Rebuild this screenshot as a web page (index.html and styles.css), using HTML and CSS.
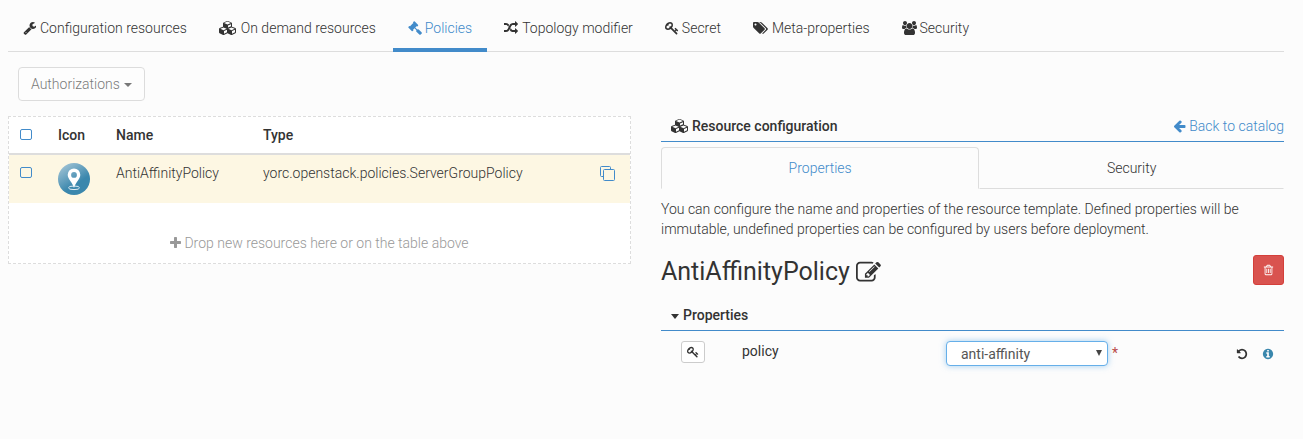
FILE: index.html
```html
<!DOCTYPE html>
<html lang="en">
<head>
<meta charset="utf-8">
<title>Policies</title>
<link rel="stylesheet" href="styles.css">
</head>
<body>
<svg class="sprite" aria-hidden="true">
  <symbol id="wrench" viewBox="0 0 1664 1792"><path d="M448 1472q0-26-19-45t-45-19-45 19-19 45 19 45 45 19 45-19 19-45zm644-420l-682 682q-37 37-90 37-52 0-91-37l-106-108q-38-36-38-90 0-53 38-91l681-681q39 98 114.500 173.500t173.500 114.500zm634-435q0 39-23 106-47 134-164.500 217.500t-258.500 83.500q-185 0-316.500-131.500t-131.500-316.500 131.500-316.500 316.500-131.500q58 0 121.500 16.500t107.500 46.500q16 11 16 28t-16 28l-293 169v224l193 107q5-3 79-48.500t135.500-81 70.500-35.500q15 0 23.500 10t8.500 25z"/></symbol>
  <symbol id="cubes" viewBox="0 0 2304 1792"><path fill-rule="evenodd" d="M640 1632l384-192v-314l-384 164zM576 1178l404-173-404-173-404 173zM1664 1632l384-192v-314l-384 164zM1600 1178l404-173-404-173-404 173zM1152 835l384-165v-266l-384 164zM1088 456l441-189-441-189-441 189zM2176 1024v416q0 36-19 67t-52 47l-448 224q-25 14-57 14t-57-14l-448-224q-4-2-7-4-2 2-7 4l-448 224q-25 14-57 14t-57-14l-448-224q-33-16-52-47t-19-67v-416q0-38 21.500-70t56.500-48l434-186v-400q0-38 21.500-70t56.500-48l448-192q23-10 50-10t50 10l448 192q35 16 56.500 48t21.500 70v400l434 186q36 16 57 48t21 70z"/></symbol>
  <symbol id="gavel" viewBox="0 0 1792 1792"><path d="M1771 1536q0 53-37 90l-107 108q-39 37-91 37-53 0-90-37l-363-364q-38-36-38-90 0-53 43-96l-256-256-126 126q-14 14-34 14t-34-14q2 2 12.500 12t12.500 13 10 11.500 10 13.500 6 13.500 5.500 16.500 1.500 18q0 38-28 68-3 3-16.500 18t-19 20.500-18.500 16.500-22 15.500-22 9-26 4.500q-40 0-68-28l-408-408q-28-28-28-68 0-13 4.500-26t9-22 15.500-22 16.500-18.500 20.500-19 18-16.500q30-28 68-28 10 0 18 1.500t16.500 5.500 13.500 6 13.500 10 11.500 10 13 12.500 12 12.500q-14-14-14-34t14-34l348-348q14-14 34-14t34 14q-2-2-12.500-12t-12.500-13-10-11.500-10-13.500-6-13.500-5.500-16.500-1.500-18q0-38 28-68 3-3 16.500-18t19-20.500 18.500-16.500 22-15.500 22-9 26-4.500q40 0 68 28l408 408q28 28 28 68 0 13-4.500 26t-9 22-15.500 22-16.500 18.500-20.500 19-18 16.500q-30 28-68 28-10 0-18-1.500t-16.500-5.500-13.500-6-13.500-10-11.500-10-13-12.500-12-12.500q14 14 14 34t-14 34l-126 126 256 256q43-43 96-43 52 0 91 37l363 363q37 39 37 91z"/></symbol>
  <symbol id="random" viewBox="0 0 1792 1792"><path d="M666 481q-60 92-137 273-22-45-37-72.500t-40.500-63.500-51-56.500-63-35-81.500-14.500h-224q-14 0-23-9t-9-23v-192q0-14 9-23t23-9h224q250 0 410 225zm1126 799q0 14-9 23l-320 320q-9 9-23 9-13 0-22.500-9.500t-9.500-22.500v-192q-32 0-85 .5t-81 1-73-1-71-5-64-10.500-63-18.500-58-28.500-59-40-55-53.500-56-69.500q59-93 136-273 22 45 37 72.500t40.500 63.500 51 56.500 63 35 81.500 14.500h256v-192q0-14 9-23t23-9q12 0 24 10l319 319q9 9 9 23zm0-896q0 14-9 23l-320 320q-9 9-23 9-13 0-22.500-9.500t-9.500-22.500v-192h-256q-48 0-87 15t-69 45-51 61.500-45 77.500q-32 62-78 171-29 66-49.500 111t-54 105-64 100-74 83-90 68.500-106.500 42-128 16.500h-224q-14 0-23-9t-9-23v-192q0-14 9-23t23-9h224q48 0 87-15t69-45 51-61.500 45-77.500q32-62 78-171 29-66 49.500-111t54-105 64-100 74-83 90-68.500 106.500-42 128-16.500h256v-192q0-14 9-23t23-9q12 0 24 10l319 319q9 9 9 23z"/></symbol>
  <symbol id="key" viewBox="0 0 1792 1792"><path d="M832 512q0-80-56-136t-136-56-136 56-56 136q0 42 19 83-41-19-83-19-80 0-136 56t-56 136 56 136 136 56 136-56 56-136q0-42-19-83 41 19 83 19 80 0 136-56t56-136zm851 704q0 17-49 66t-66 49q-9 0-28.500-16t-36.500-33-38.500-40-24.500-26l-96 96 220 220q28 28 28 68 0 42-39 81t-81 39q-40 0-68-28l-671-671q-176 131-365 131-163 0-265.500-102.500t-102.500-265.500q0-160 95-313t248-248 313-95q163 0 265.500 102.500t102.500 265.500q0 189-131 365l355 355 96-96q-3-3-26-24.500t-40-38.500-33-36.500-16-28.500q0-17 49-66t66-49q13 0 23 10 6 6 46 44.500t82 79.500 86.500 86 73 78 28.500 41z"/></symbol>
  <symbol id="tags" viewBox="0 0 1920 1792"><path d="M448 448q0-53-37.500-90.500t-90.500-37.500-90.500 37.500-37.500 90.500 37.500 90.500 90.500 37.500 90.500-37.500 37.500-90.500zm1067 576q0 53-37 90l-491 492q-39 37-91 37-53 0-90-37l-715-716q-38-37-64.500-101t-26.500-117v-416q0-52 38-90t90-38h416q53 0 117 26.500t102 64.500l715 714q37 39 37 91zm384 0q0 53-37 90l-491 492q-39 37-91 37-36 0-59-14t-53-45l470-470q37-37 37-90 0-52-37-91l-715-714q-38-38-102-64.500t-117-26.500h224q53 0 117 26.500t102 64.500l715 714q37 39 37 91z"/></symbol>
  <symbol id="users" viewBox="0 0 1920 1792"><path d="M593 896q-162 5-265 128h-134q-82 0-138-40.500t-56-118.500q0-353 124-353 6 0 43.500 21t97.500 42.500 119 21.500q67 0 133-23-5 37-5 66 0 139 81 256zm1071 637q0 120-73 189.500t-194 69.500h-874q-121 0-194-69.500t-73-189.500q0-53 3.500-103.500t14-109 26.500-108.500 43-97.500 62-81 85.500-53.500 111.500-20q10 0 43 21.500t73 48 107 48 135 21.500 135-21.500 107-48 73-48 43-21.500q61 0 111.500 20t85.500 53.500 62 81 43 97.500 26.500 108.500 14 109 3.500 103.500zm-1024-1277q0 106-75 181t-181 75-181-75-75-181 75-181 181-75 181 75 75 181zm704 384q0 159-112.500 271.500t-271.500 112.500-271.500-112.500-112.500-271.500 112.500-271.500 271.500-112.500 271.500 112.500 112.500 271.500zm576 225q0 78-56 118.500t-138 40.500h-134q-103-123-265-128 81-117 81-256 0-29-5-66 66 23 133 23 59 0 119-21.500t97.500-42.500 43.500-21q124 0 124 353zm-128-609q0 106-75 181t-181 75-181-75-75-181 75-181 181-75 181 75 75 181z"/></symbol>
  <symbol id="plus" viewBox="192 0 1408 1792"><path d="M1600 736v192q0 40-28 68t-68 28h-416v416q0 40-28 68t-68 28h-192q-40 0-68-28t-28-68v-416h-416q-40 0-68-28t-28-68v-192q0-40 28-68t68-28h416v-416q0-40 28-68t68-28h192q40 0 68 28t28 68v416h416q40 0 68 28t28 68z"/></symbol>
  <symbol id="arrow-left" viewBox="64 0 1664 1792"><path d="M1664 896v128q0 53-32.500 90.500t-84.500 37.500h-704l293 294q38 36 38 90t-38 90l-75 76q-37 37-90 37-52 0-91-37l-651-652q-37-37-37-90 0-52 37-91l651-650q38-38 91-38 52 0 90 38l75 74q38 38 38 91t-38 91l-293 293h704q52 0 84.500 37.500t32.500 90.500z"/></symbol>
  <symbol id="edit" viewBox="0 0 1792 1792"><path d="M888 1184l116-116-152-152-116 116v56h96v96h56zm440-720q-16-16-33 1l-350 350q-17 17-1 33t33-1l350-350q17-17 1-33zm80 594v190q0 119-84.500 203.500t-203.500 84.500h-832q-119 0-203.500-84.500t-84.500-203.500v-832q0-119 84.500-203.500t203.500-84.500h832q63 0 117 25 15 7 18 23 3 17-9 29l-49 49q-14 14-32 8-23-6-45-6h-832q-66 0-113 47t-47 113v832q0 66 47 113t113 47h832q66 0 113-47t47-113v-126q0-13 9-22l64-64q15-15 35-7t20 29zm-96-738l288 288-672 672h-288v-288zm444 132l-92 92-288-288 92-92q28-28 68-28t68 28l152 152q28 28 28 68t-28 68z"/></symbol>
  <symbol id="trash" viewBox="192 0 1408 1792"><path d="M704 736v576q0 14-9 23t-23 9h-64q-14 0-23-9t-9-23v-576q0-14 9-23t23-9h64q14 0 23 9t9 23zm256 0v576q0 14-9 23t-23 9h-64q-14 0-23-9t-9-23v-576q0-14 9-23t23-9h64q14 0 23 9t9 23zm256 0v576q0 14-9 23t-23 9h-64q-14 0-23-9t-9-23v-576q0-14 9-23t23-9h64q14 0 23 9t9 23zm128 724v-948h-896v948q0 22 7 40.500t14.500 27 10.500 8.500h832q3 0 10.500-8.500t14.500-27 7-40.500zm-672-1076h448l-48-117q-7-9-17-11h-317q-10 2-17 11zm928 32v64q0 14-9 23t-23 9h-96v948q0 83-47 143.500t-113 60.500h-832q-66 0-113-58.500t-47-141.500v-952h-96q-14 0-23-9t-9-23v-64q0-14 9-23t23-9h309l70-167q15-37 54-63t79-26h320q40 0 79 26t54 63l70 167h309q14 0 23 9t9 23z"/></symbol>
  <symbol id="undo" viewBox="128 0 1536 1792"><path d="M1664 896q0 156-61 298t-164 245-245 164-298 61q-172 0-327-72.500t-264-204.500q-7-10-6.500-22.500t8.500-20.500l137-138q10-9 25-9 16 2 23 12 73 95 179 147t225 52q104 0 198.500-40.500t163.500-109.500 109.500-163.500 40.500-198.500-40.500-198.500-109.500-163.500-163.500-109.500-198.500-40.500q-98 0-188 35.500t-160 101.500l137 138q31 30 14 69-17 40-59 40h-448q-26 0-45-19t-19-45v-448q0-42 40-59 39-17 69 14l130 129q107-101 244.500-156.500t284.500-55.500q156 0 298 61t245 164 164 245 61 298z"/></symbol>
  <symbol id="info" viewBox="128 0 1536 1792"><path d="M1152 1376v-160q0-14-9-23t-23-9h-96v-512q0-14-9-23t-23-9h-320q-14 0-23 9t-9 23v160q0 14 9 23t23 9h96v320h-96q-14 0-23 9t-9 23v160q0 14 9 23t23 9h448q14 0 23-9t9-23zm-128-896v-160q0-14-9-23t-23-9h-192q-14 0-23 9t-9 23v160q0 14 9 23t23 9h192q14 0 23-9t9-23zm640 416q0 209-103 385.500t-279.500 279.500-385.500 103-385.500-103-279.500-279.500-103-385.500 103-385.500 279.500-279.500 385.500-103 385.500 103 279.500 279.500 103 385.500z"/></symbol>
</svg>

<nav class="main-tabs">
  <a class="main-tab" href="#"><svg class="icon w13"><use href="#wrench"/></svg>Configuration resources</a>
  <a class="main-tab" href="#"><svg class="icon w18"><use href="#cubes"/></svg>On demand resources</a>
  <a class="main-tab active" href="#"><svg class="icon tight"><use href="#gavel"/></svg>Policies</a>
  <a class="main-tab" href="#"><svg class="icon"><use href="#random"/></svg>Topology modifier</a>
  <a class="main-tab" href="#"><svg class="icon tight"><use href="#key"/></svg>Secret</a>
  <a class="main-tab" href="#"><svg class="icon w15"><use href="#tags"/></svg>Meta-properties</a>
  <a class="main-tab" href="#"><svg class="icon w15 tight"><use href="#users"/></svg>Security</a>
</nav>

<div class="toolbar">
  <button class="auth" type="button" disabled>Authorizations<span class="caret"></span></button>
</div>

<main class="columns">
  <section class="drop-panel">
    <table class="resources">
      <thead>
        <tr>
          <th class="col-check"><input class="check" type="checkbox" aria-label="Select all"></th>
          <th class="col-icon">Icon</th>
          <th class="col-name">Name</th>
          <th>Type</th>
          <th class="col-copy"></th>
        </tr>
      </thead>
      <tbody>
        <tr class="selected">
          <td class="col-check"><input class="check" type="checkbox" aria-label="Select AntiAffinityPolicy"></td>
          <td>
            <svg class="pin" viewBox="0 0 32 32" aria-hidden="true">
              <defs><linearGradient id="disc" x1="0.1" y1="0" x2="0.7" y2="0.9"><stop offset="0" stop-color="#a9c8d8"/><stop offset="0.75" stop-color="#3a87ad"/></linearGradient></defs>
              <circle cx="16" cy="16" r="16" fill="url(#disc)"/>
              <ellipse cx="16" cy="24.800" rx="5.500" ry="1.800" fill="none" stroke="#e4eff5" stroke-width="1"/>
              <path fill="#fff" fill-rule="evenodd" d="M16 5.500a6.300 6.300 0 0 0-6.300 6.300c0 4.300 4.600 7.200 6.300 13.200 1.700-6 6.300-8.900 6.300-13.200A6.300 6.300 0 0 0 16 5.500zM16 9a2.900 2.900 0 1 1 0 5.800A2.900 2.900 0 0 1 16 9z"/>
            </svg>
          </td>
          <td>AntiAffinityPolicy</td>
          <td>yorc.openstack.policies.ServerGroupPolicy</td>
          <td class="col-copy">
            <button class="plain" type="button" aria-label="Duplicate"><svg class="copy" viewBox="0 0 15 15"><path d="M3.500 10.500h-2a1 1 0 0 1-1-1v-8a1 1 0 0 1 1-1h8a1 1 0 0 1 1 1v2"/><rect x="3.500" y="3.500" width="11" height="11" rx="1"/></svg></button>
          </td>
        </tr>
      </tbody>
    </table>
    <p class="drop-hint"><svg class="icon w11 tight"><use href="#plus"/></svg>Drop new resources here or on the table above</p>
  </section>

  <section class="details">
    <header class="section-head">
      <h2 class="section-title"><svg class="icon w18 tight"><use href="#cubes"/></svg>Resource configuration</h2>
      <a class="link" href="#"><svg class="icon w13 tight"><use href="#arrow-left"/></svg>Back to catalog</a>
    </header>
    <nav class="sub-tabs">
      <a class="sub-tab active" href="#">Properties</a>
      <a class="sub-tab" href="#">Security</a>
    </nav>
    <p class="intro">You can configure the name and properties of the resource template. Defined properties will be immutable, undefined properties can be configured by users before deployment.</p>
    <div class="name-row">
      <h1 class="name">AntiAffinityPolicy<button class="plain" type="button" aria-label="Rename"><svg class="edit"><use href="#edit"/></svg></button></h1>
      <button class="delete" type="button" aria-label="Delete"><svg class="icon-trash"><use href="#trash"/></svg></button>
    </div>
    <header class="section-head">
      <h2 class="section-title"><span class="caret"></span>Properties</h2>
    </header>
    <div class="property">
      <button class="secret" type="button" aria-label="Use a secret"><svg class="icon-small"><use href="#key"/></svg></button>
      <label class="property-name" for="policy">policy</label>
      <div class="property-value">
        <span class="select-wrap"><select id="policy" class="select"><option>anti-affinity</option></select></span>
        <span class="required">*</span>
      </div>
      <div class="actions">
        <button class="plain" type="button" aria-label="Reset"><svg class="icon-small"><use href="#undo"/></svg></button>
        <button class="plain info" type="button" aria-label="Information"><svg class="icon-small"><use href="#info"/></svg></button>
      </div>
    </div>
  </section>
</main>
</body>
</html>
```
FILE: styles.css
```css
* { box-sizing: border-box; }

body {
  margin: 0;
  padding: 8px 19px 8px 8px;
  background: #fcfcfc;
  color: #333;
  font-family: Roboto, "Liberation Sans", sans-serif;
  font-size: 14px;
  font-weight: 300;
  line-height: 20px;
}

a { color: inherit; text-decoration: none; }
h1, h2, p { margin: 0; }
button, select { font: inherit; color: inherit; }
svg { fill: currentColor; }

.sprite { position: absolute; width: 0; height: 0; }

.icon { width: 14px; height: 14px; margin-right: 4px; vertical-align: -2px; overflow: visible; }
.tight { margin-right: 3px; }
.w11 { width: 11px; }
.w13 { width: 13px; }
.w15 { width: 15px; }
.w18 { width: 18px; }

.plain { display: inline-flex; padding: 0; border: 0; background: none; }

.caret {
  display: inline-block;
  margin-left: 4px;
  border-top: 4px solid;
  border-left: 4px solid transparent;
  border-right: 4px solid transparent;
  vertical-align: middle;
}

.main-tabs { display: flex; gap: 2px; border-bottom: 1px solid #ddd; }
.main-tab { margin-bottom: -1px; padding: 10px 15px; border-bottom: 4px solid transparent; white-space: nowrap; }
.main-tab.active { border-color: #428bca; color: #428bca; }

.toolbar { padding: 15px 10px; }
.auth {
  display: block;
  padding: 6px 12px;
  border: 1px solid #ccc;
  border-radius: 4px;
  background: #fff;
  opacity: 0.65;
}

.columns { display: grid; grid-template-columns: 1fr 1fr; gap: 30px; align-items: start; }

.drop-panel { border: 1px dashed #ddd; background: #fff; }
.resources { width: 100%; border-collapse: collapse; }
.resources th, .resources td { padding: 8px; text-align: left; vertical-align: top; }
.resources th { border-bottom: 2px solid #ddd; font-weight: 500; }
.selected { background: #fdf7e3; }
.resources .col-check { width: 41px; padding-left: 11px; }
.col-icon { width: 58px; }
.col-name { width: 147px; }
.resources .col-copy { width: 38px; }
.check {
  appearance: none;
  display: block;
  width: 12px;
  height: 11px;
  margin: 4px 0 0;
  border: 1px solid #428bca;
  border-radius: 2px;
}
.pin { display: block; width: 32px; height: 32px; }
.copy { width: 15px; height: 15px; margin-top: 3px; fill: none; stroke: #428bca; }
.drop-hint { padding: 30px 8px 10px; color: #999; text-align: center; }

.section-head { display: flex; justify-content: space-between; padding-bottom: 5px; border-bottom: 1px solid #428bca; }
.section-title { padding-left: 10px; font-size: 14px; font-weight: 500; }
.section-title .caret { margin: 0 4px 0 0; border-top-width: 5px; }
.link { color: #428bca; }

.sub-tabs { display: flex; margin-top: 5px; }
.sub-tab { flex: 1 1 auto; padding: 10px; border: 1px solid transparent; border-bottom-color: #ddd; text-align: center; }
.sub-tab.active { border-color: #ddd #ddd transparent; border-radius: 4px 4px 0 0; color: #428bca; }

.intro { margin-top: 10px; }

.name-row { display: flex; justify-content: space-between; align-items: flex-end; margin: 16px 0 20px; }
.name { display: flex; gap: 6px; align-items: center; font-size: 25px; font-weight: 400; line-height: 26px; }
.edit { width: 25px; height: 25px; }
.delete {
  display: inline-flex;
  padding: 8px 9px;
  border: 1px solid #d43f3a;
  border-radius: 3px;
  background: #d9534f;
  color: #fff;
}
.icon-small { width: 12px; height: 12px; }
.icon-trash { width: 11px; height: 12px; }

.property { display: grid; grid-template-columns: 61px 204px 1fr auto; padding: 10px 10px 0 20px; }
.secret {
  display: inline-flex;
  justify-self: start;
  align-self: start;
  padding: 4px 5px;
  border: 1px solid #ccc;
  border-radius: 3px;
  background: #fff;
}
.property-name { font-weight: 400; }
.property-value { display: flex; gap: 4px; }
.select-wrap { display: grid; align-items: center; }
.select-wrap::after {
  grid-area: 1 / 1;
  justify-self: end;
  margin: 0 6px 2px 0;
  border-top: 6px solid #444;
  border-left: 3px solid transparent;
  border-right: 3px solid transparent;
  content: "";
  pointer-events: none;
}
.select {
  appearance: none;
  grid-area: 1 / 1;
  width: 162px;
  height: 25px;
  padding: 1px 14px 0;
  border: 1px solid #66afe9;
  border-radius: 4px;
  background: #fff;
  box-shadow: 0 0 6px rgba(102, 175, 233, 0.6);
  color: #555;
  font-weight: 400;
}
.required { color: #b94a48; font-weight: 400; line-height: 25px; }
.actions { display: flex; gap: 14px; align-items: center; }
.info { color: #3a87ad; }
```
